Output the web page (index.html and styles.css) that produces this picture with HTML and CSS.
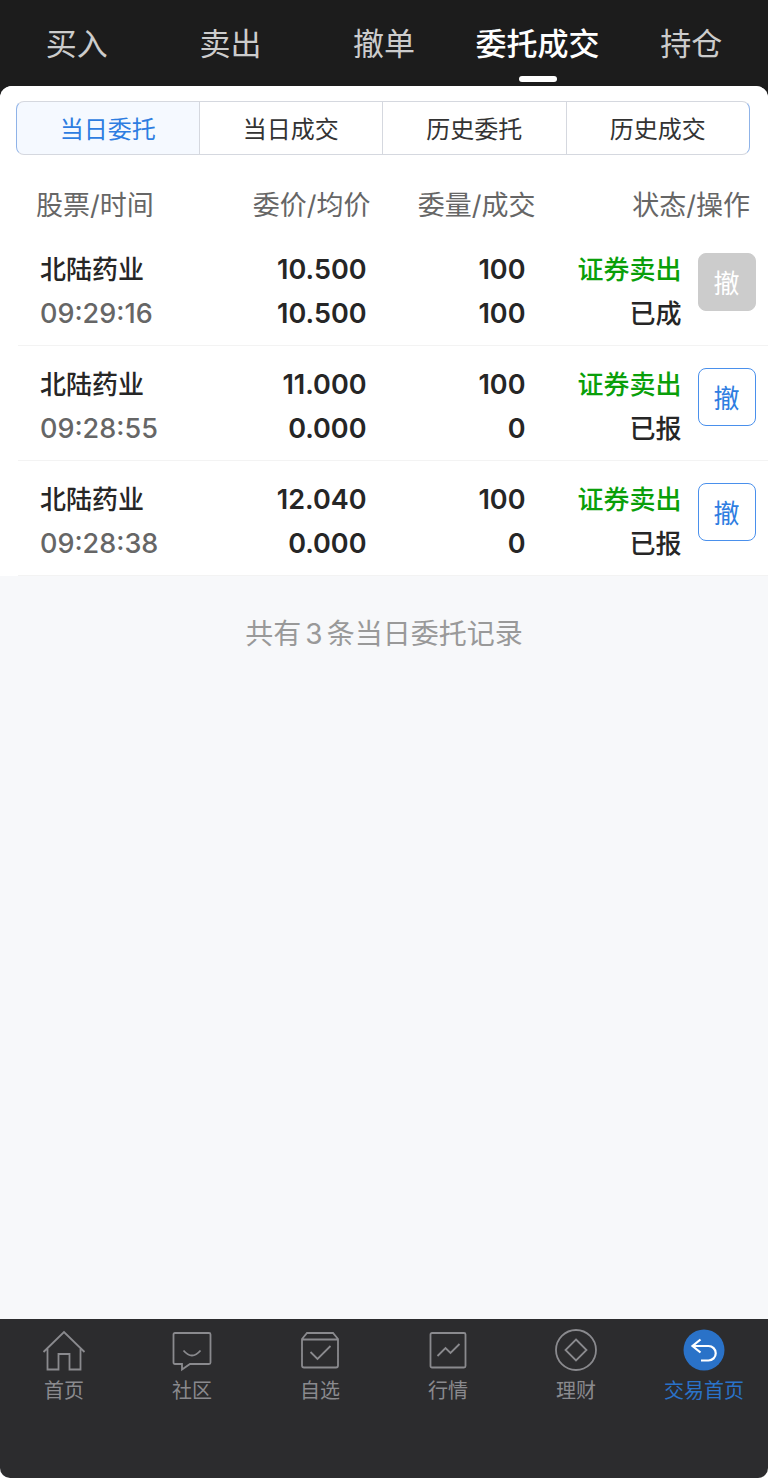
FILE: index.html
```html
<!DOCTYPE html>
<html lang="zh-CN">
<head>
    <meta charset="UTF-8">
    <meta name="viewport" content="width=device-width, initial-scale=1">
    <title>委托成交</title>
    <link rel="stylesheet" href="styles.css">
</head>
<body>
    <header class="top">
        <nav class="top-nav">
            <a href="#">买入</a>
            <a href="#">卖出</a>
            <a href="#">撤单</a>
            <a href="#" class="active">委托成交</a>
            <a href="#">持仓</a>
        </nav>
    </header>

    <main class="content">
        <section class="panel">
            <div class="tabs">
                <button type="button" class="active">当日委托</button>
                <button type="button">当日成交</button>
                <button type="button">历史委托</button>
                <button type="button">历史成交</button>
            </div>

            <table class="orders">
                <colgroup>
                    <col class="w-name">
                    <col class="w-price">
                    <col class="w-amount">
                    <col class="w-status">
                    <col>
                </colgroup>
                <thead>
                    <tr>
                        <th class="col-name">股票/时间</th>
                        <th>委价/均价</th>
                        <th>委量/成交</th>
                        <th class="col-action" colspan="2">状态/操作</th>
                    </tr>
                </thead>
                <tbody>
                    <tr>
                        <td class="name">北陆药业<br><span class="time">09:29:16</span></td>
                        <td class="price">10.500<br>10.500</td>
                        <td class="amount">100<br>100</td>
                        <td class="status"><span class="sell">证券卖出</span><br>已成</td>
                        <td class="action"><button type="button" class="cancel" disabled>撤</button></td>
                    </tr>
                    <tr>
                        <td class="name">北陆药业<br><span class="time">09:28:55</span></td>
                        <td class="price">11.000<br>0.000</td>
                        <td class="amount">100<br>0</td>
                        <td class="status"><span class="sell">证券卖出</span><br>已报</td>
                        <td class="action"><button type="button" class="cancel">撤</button></td>
                    </tr>
                    <tr>
                        <td class="name">北陆药业<br><span class="time">09:28:38</span></td>
                        <td class="price">12.040<br>0.000</td>
                        <td class="amount">100<br>0</td>
                        <td class="status"><span class="sell">证券卖出</span><br>已报</td>
                        <td class="action"><button type="button" class="cancel">撤</button></td>
                    </tr>
                </tbody>
            </table>
        </section>
        <p class="summary">共有<span class="count">3</span>条当日委托记录</p>
    </main>

    <nav class="bottom-nav">
        <a href="#">
            <svg viewBox="0 0 44 44"><path d="M1.5 23 22 3l20.500 20M5.500 19.500V40.500H16.500V25H27.500V40.500H38.500V19.500"/></svg>
            首页
        </a>
        <a href="#">
            <svg viewBox="0 0 44 44"><path d="M5 4H39Q40.500 4 40.500 5.500V33.500Q40.500 35 39 35H20L12 40.500V35H5Q3.500 35 3.500 33.500V5.500Q3.500 4 5 4ZM13.500 21.500Q22 31.500 30.500 21.500"/></svg>
            社区
        </a>
        <a href="#">
            <svg viewBox="0 0 44 44"><path d="M4 10 9 4H35L40 10V36.500Q40 38.500 38 38.500H6Q4 38.500 4 36.500ZM4 10.500H40M12.500 23 19.500 30 32.500 17"/></svg>
            自选
        </a>
        <a href="#">
            <svg viewBox="0 0 44 44"><rect x="4.500" y="4" width="35" height="34.500" rx="1.500"/><path d="M11.500 27 19.500 19 24.500 24 33.500 15"/></svg>
            行情
        </a>
        <a href="#">
            <svg viewBox="0 0 44 44"><circle cx="22" cy="21" r="20"/><path d="M22 10.500 32.500 21 22 31.500 11.500 21Z"/></svg>
            理财
        </a>
        <a href="#" class="active">
            <svg viewBox="0 0 44 44"><circle class="disc" cx="22" cy="21" r="20.500"/><path class="arrow" d="M18.500 10.500 10.500 17 18.500 23.500M11 17H26.500A7.200 7.200 0 0 1 26.500 31.500H19"/></svg>
            交易首页
        </a>
    </nav>
</body>
</html>
```
FILE: styles.css
```css
* {
    box-sizing: border-box;
}
body {
    margin: 0;
    min-height: 100vh;
    display: flex;
    flex-direction: column;
    background: #fff;
    color: #262626;
    font-family: Inter, "Noto Sans CJK SC", sans-serif;
}
a {
    text-decoration: none;
}
button {
    font-family: inherit;
    padding: 0 0 2px;
    cursor: pointer;
}

/* top navigation */
.top {
    background: #1c1c1c;
    padding-bottom: 12px;
    margin-bottom: -12px;
}
.top-nav {
    display: grid;
    grid-template-columns: repeat(5, 1fr);
    height: 86px;
}
.top-nav a {
    position: relative;
    color: #ccc;
    font-size: 31px;
    line-height: 88px;
    text-align: center;
    white-space: nowrap;
}
.top-nav a.active {
    color: #fff;
    font-weight: 500;
}
.top-nav a.active::after {
    content: "";
    position: absolute;
    left: 50%;
    bottom: 6px;
    width: 38px;
    height: 6px;
    margin-left: -19px;
    border-radius: 3px;
    background: #fff;
}

.content {
    flex: 1;
    background: #f7f8fa;
    border-radius: 12px 12px 0 0;
}
.panel {
    background: #fff;
    border-radius: 12px 12px 0 0;
    padding-top: 15px;
}

/* segmented tabs */
.tabs {
    display: grid;
    grid-template-columns: repeat(4, 1fr);
    margin: 0 18px 0 16px;
}
.tabs button {
    height: 54px;
    border: 1px solid #d5d8df;
    border-left-width: 0;
    background: #fff;
    color: #333;
    font-size: 24px;
}
.tabs button:first-child {
    border-left: 1px solid #8fb3e8;
    border-radius: 8px 0 0 8px;
}
.tabs button:last-child {
    border-right-color: #8fb3e8;
    border-radius: 0 8px 8px 0;
}
.tabs button.active {
    background: #f5f9ff;
    color: #2e7de1;
}

/* order list */
.orders {
    width: calc(100% - 18px);
    margin-left: 18px;
    table-layout: fixed;
    border-collapse: separate;
    border-spacing: 0;
    font-size: 26px;
    line-height: 44px;
    text-align: right;
    white-space: nowrap;
}
.w-name {
    width: 25%;
}
.w-price, .w-amount {
    width: 22%;
}
.w-status {
    width: 20%;
}
.orders th {
    height: 76px;
    padding: 29px 0 3px;
    color: #666;
    font-size: 27px;
    font-weight: 400;
}
.orders td {
    padding: 17px 0 9px;
    border-bottom: 1px solid #f3f3f3;
    font-weight: 500;
    vertical-align: top;
}
.orders .col-name {
    padding-left: 18px;
    text-align: left;
}
.orders .col-action {
    padding-right: 18px;
}
.orders .name {
    padding-left: 22px;
    text-align: left;
}
.orders .price, .orders .amount {
    font-size: 27px;
    font-weight: 600;
}
.orders .price {
    padding-right: 4px;
}
.orders .amount {
    padding-right: 10px;
}
.orders .status {
    padding-right: 4px;
}
.orders .action {
    padding: 22px 0 0 12px;
    text-align: left;
    line-height: 0;
}
.time {
    color: #666;
    font-size: 27px;
}
.sell {
    color: #0a9f0a;
}
.cancel {
    width: 58px;
    height: 58px;
    border: 1px solid #4a90ec;
    border-radius: 8px;
    background: #fff;
    color: #2e7de1;
    font-size: 26px;
}
.cancel:disabled {
    border-color: #ccc;
    background: #ccc;
    color: #fff;
}

.summary {
    margin: 0;
    padding-top: 36px;
    color: #999;
    font-size: 28px;
    line-height: 44px;
    text-align: center;
}
.count {
    margin: 0 4px;
}

/* bottom navigation */
.bottom-nav {
    display: grid;
    grid-template-columns: repeat(6, 1fr);
    height: 159px;
    margin-bottom: 1px;
    padding-top: 10px;
    border-radius: 0 0 10px 10px;
    background: #2c2c2e;
}
.bottom-nav a {
    display: flex;
    flex-direction: column;
    align-items: center;
    color: #8a8a8e;
    font-size: 20px;
    line-height: 36px;
    white-space: nowrap;
}
.bottom-nav a.active {
    color: #2a72c8;
}
.bottom-nav svg {
    width: 44px;
    height: 44px;
    fill: none;
    stroke: currentColor;
    stroke-width: 1.8;
}
.bottom-nav .disc {
    fill: currentColor;
    stroke: none;
}
.bottom-nav .arrow {
    stroke: #fff;
    stroke-width: 2.2;
}
```
